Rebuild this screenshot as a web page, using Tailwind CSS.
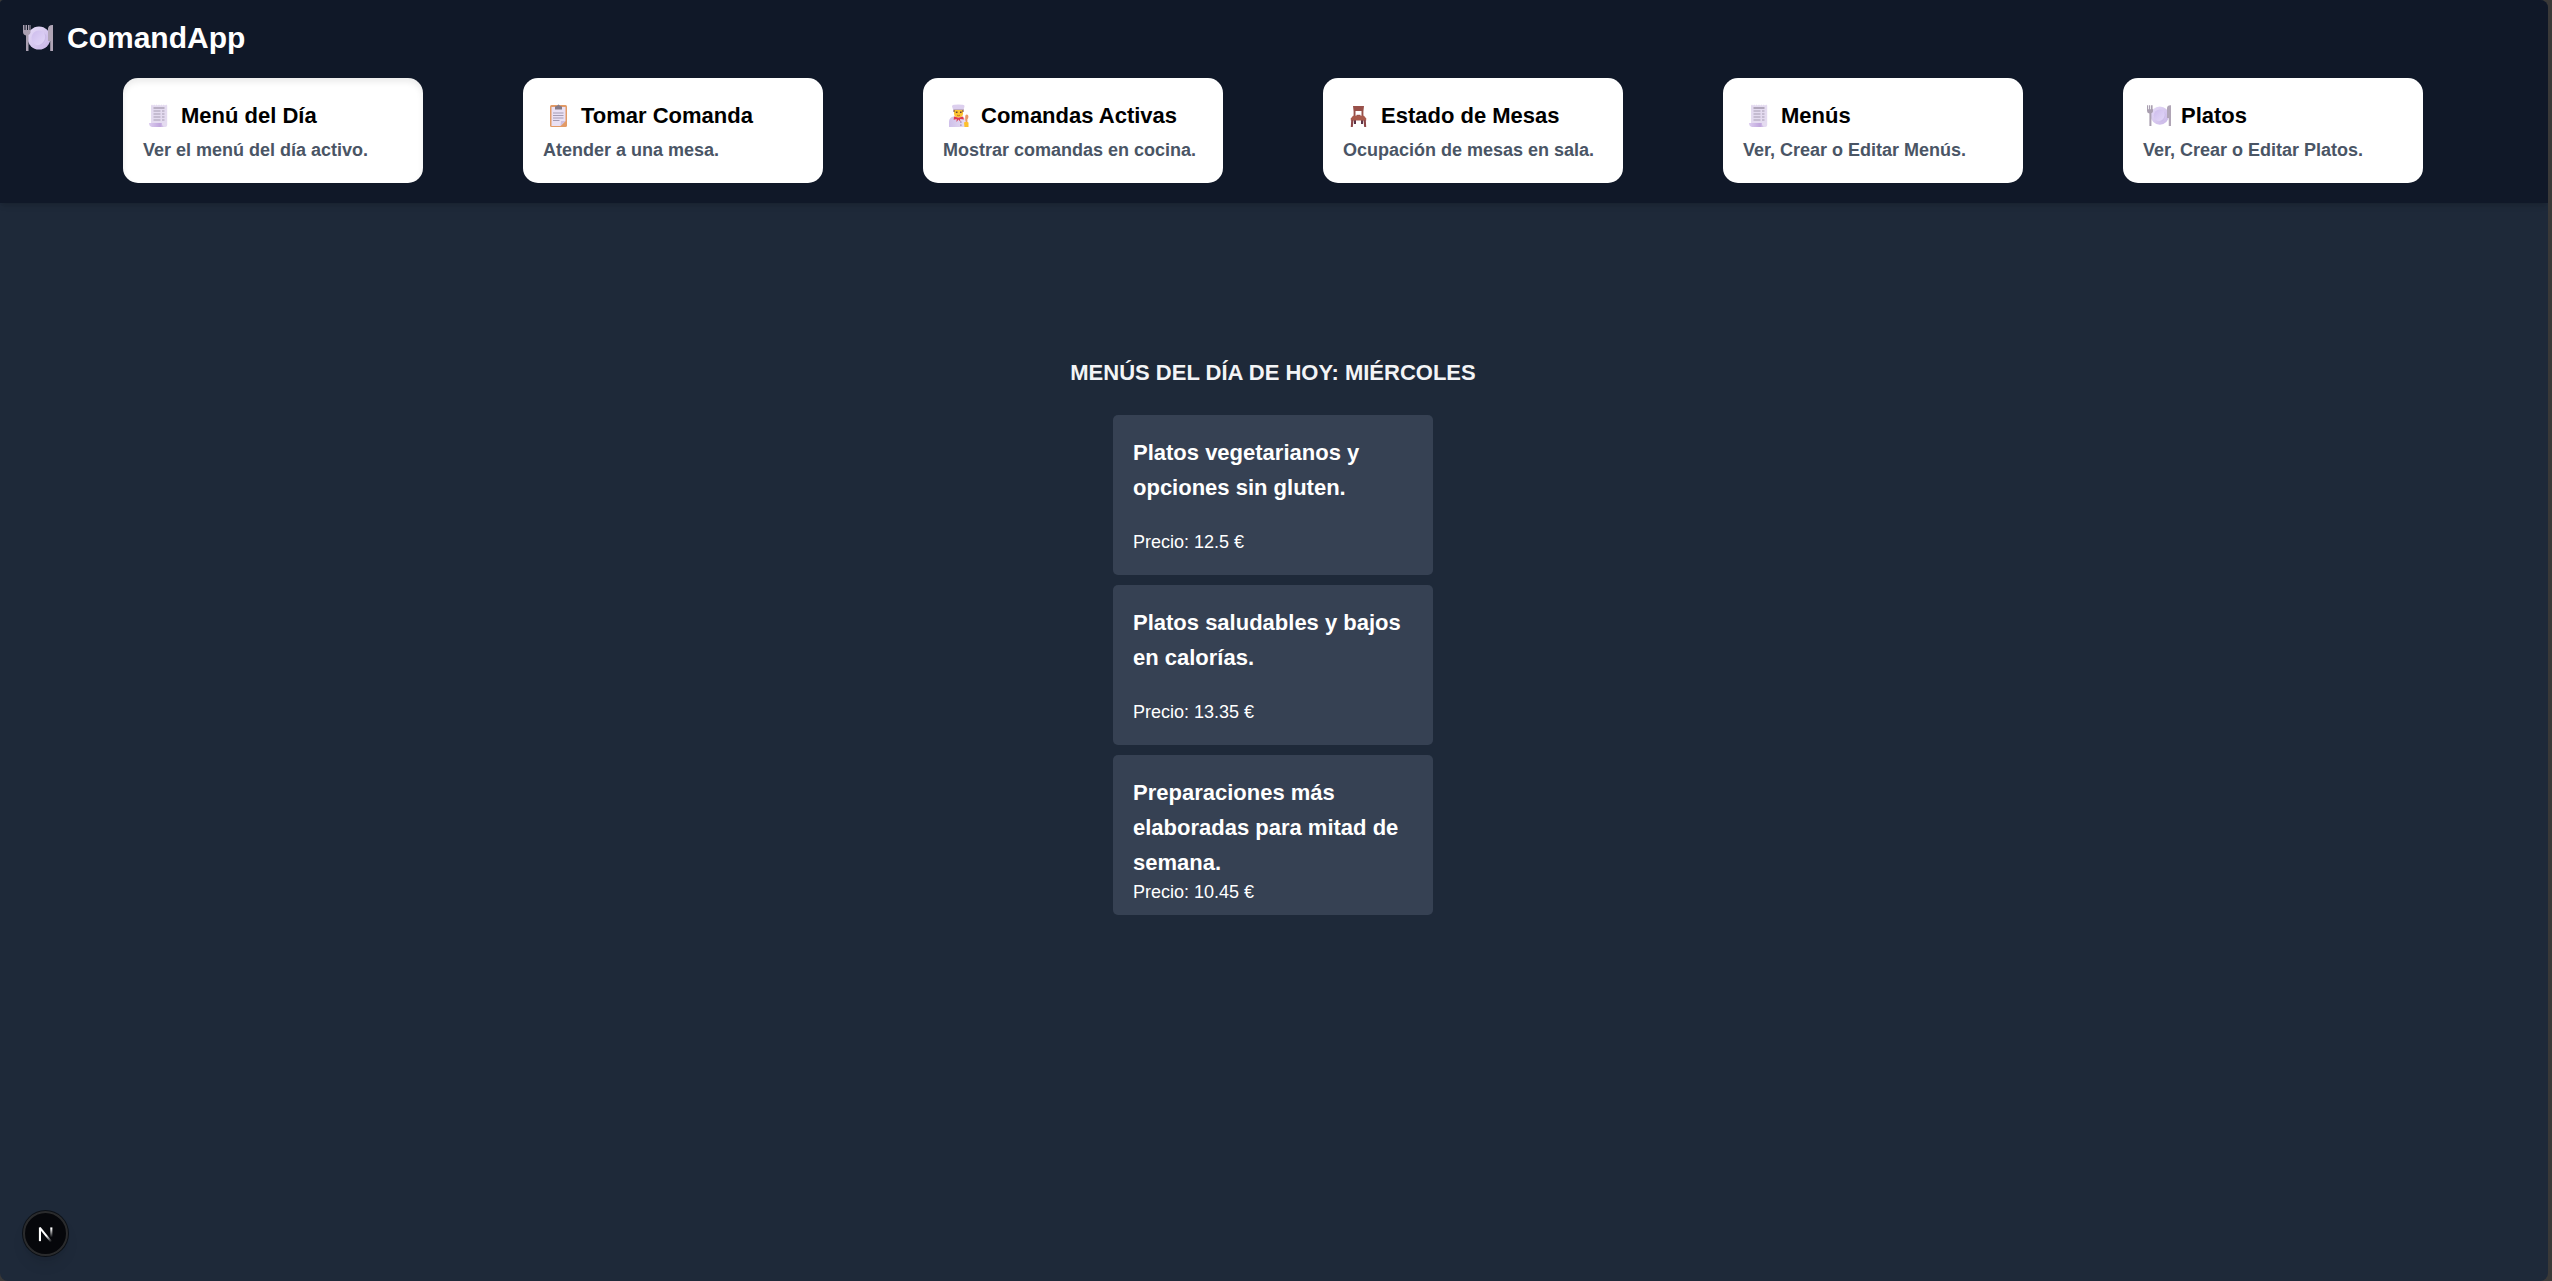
<!DOCTYPE html>
<html lang="es" class="bg-[#3a3938]">
<head>
<meta charset="utf-8">
<meta name="viewport" content="width=device-width, initial-scale=1">
<title>ComandApp</title>
<script src="https://cdn.jsdelivr.net/npm/@tailwindcss/browser@4"></script>
</head>
<body class="pr-1 font-['Liberation_Sans',Arial,sans-serif]">

<!-- Shared icon symbols -->
<svg class="absolute size-0" aria-hidden="true">
  <defs>
    <linearGradient id="plateFill" x1="0" y1="0" x2="1" y2="1"><stop offset="0" stop-color="#e6dcf8"/><stop offset="1" stop-color="#c8b5e6"/></linearGradient>
    <linearGradient id="plateInner" x1="0" y1="0" x2="1" y2="1"><stop offset="0" stop-color="#cdbcec"/><stop offset=".5" stop-color="#d9cbf3"/><stop offset="1" stop-color="#e3d8f7"/></linearGradient>
    <linearGradient id="rollFill" x1="0" y1="0" x2="1" y2="0"><stop offset="0" stop-color="#dccdf0"/><stop offset=".7" stop-color="#c0a6dc"/><stop offset="1" stop-color="#e6dcf4"/></linearGradient>
    <linearGradient id="coatFill" x1="0" y1="0" x2="1" y2="0"><stop offset="0" stop-color="#cfc0ea"/><stop offset="1" stop-color="#e6def2"/></linearGradient>
    <linearGradient id="nDiag" x1="11" y1="11" x2="15" y2="17" gradientUnits="userSpaceOnUse"><stop stop-color="#fff"/><stop offset="1" stop-color="#fff" stop-opacity="0"/></linearGradient>
    <linearGradient id="nStem" x1="0" y1="5" x2="0" y2="13" gradientUnits="userSpaceOnUse"><stop stop-color="#fff"/><stop offset="1" stop-color="#fff" stop-opacity="0"/></linearGradient>
  </defs>
  <symbol id="plate" viewBox="0 0 30 27">
    <circle cx="16" cy="13" r="11.5" fill="url(#plateFill)"/>
    <circle cx="16" cy="13" r="7.5" fill="url(#plateInner)"/>
    <path d="M21 7.500a7.500 7.500 0 0 1-7 12.700a8.500 8.500 0 0 0 7-12.700z" fill="#bfaee0" opacity=".6"/>
    <path d="M0 0h1.500v5h1V0h1.500v5h1V0H6.500v5h.5V0h.5v7.500a3 3 0 0 1-2 2.500V26H3V10.500A3.500 3.500 0 0 1 0 7z" fill="#a99fb0"/>
    <path d="M25 3.500Q25.500 0 29 0h1v26h-2.800V16H25z" fill="#b0a5b6"/>
  </symbol>
  <symbol id="receipt" viewBox="0 0 24 24">
    <path d="M4 1.500l1-.9 1 .9 1.200-.9 1.200.9 1.200-.9 1.200.9 1.200-.9 1.200.9 1.200-.9 1.200.9 1.200-.9 1.200.9 1.200-.9 1 .9V21a2 2 0 0 1-2 2H8L4 19z" fill="#e4dbf0"/>
    <path d="M6.500 4h11" stroke="#8d8498" stroke-width="1.200"/>
    <path d="M6.500 7h7M6.500 10h7M6.500 13h7M6.500 16h7M15 7h2.500M15 10h2.500M15 13h2.500M15 16h2.500" stroke="#a69eb2" stroke-width="1.200"/>
    <path d="M2 19h13q-.5 3 3 4H5q-3-.5-3-4z" fill="url(#rollFill)"/>
  </symbol>
  <symbol id="clipboard" viewBox="0 0 24 24">
    <rect x="3" y="1" width="17" height="22" rx="1.500" fill="#e29a66"/>
    <path d="M4.500 3h14v14l-5 5h-9z" fill="#e9e0f4"/>
    <path d="M18.500 17H14l-.5 5z" fill="#cdbfdf"/>
    <path d="M8 5.500V3q0-1 1.500-1h.7q.3-1.500 1.300-1.500T12.800 2h.7Q15 2 15 3v2.500z" fill="#857b88"/>
    <path d="M6 9h10.500M6 11.500h10.500M6 14h10.500M6 16.500h6.500" stroke="#a49bb3" stroke-width="1"/>
  </symbol>
  <symbol id="cook" viewBox="0 0 24 24">
    <path d="M2 23v-5q0-5 5-5.500h7q5 .5 5 5.500v5z" fill="url(#coatFill)"/>
    <path d="M7 5h9v4.500q0 4-4.500 4T7 9.500z" fill="#fcc433"/>
    <path d="M6.500 5h10v3h-1V6h-8v2h-1z" fill="#6d4239"/>
    <path d="M5 2.500Q5 .5 7.500.8q4-.8 7.500 0 3-.3 2.500 1.700l-1 3.300H6.200z" fill="#dccfee"/>
    <path d="M8.800 7.600h1.700v1.400H8.800zM13 7.600h1.600v1.400H13z" fill="#6a4436"/>
    <path d="M10 11.200q1.600 1 3 0" stroke="#b85a28" stroke-width=".8" fill="none"/>
    <path d="M7 12.500l4.500 1.300 4.500-1.300 1 3-4-.5.5 3-2-2.500-2 2.500.2-3-3 .7z" fill="#e03a50"/>
    <path d="M13.300 17.500h1.200v1.300h-1.200zM13.300 20.500h1.200v1.300h-1.200z" fill="#8878a8"/>
    <path d="M18.200 16v-3.500q0-2 1.600-2t1.600 2-1 2.800V19h-1.200z" fill="#e89a6a"/>
    <path d="M17 18.500q2-1.500 4.500 0V23h-4z" fill="#fcc02c"/>
  </symbol>
  <symbol id="chair" viewBox="0 0 24 24">
    <path d="M7 15h2v5H7zM14 15h2v5h-2z" fill="#5c3548"/>
    <path d="M6 2h11l-.6 5.500V13h-1.900V7h-6v6H6.600V7.500z" fill="#985049"/>
    <path d="M9.500 10.800h4V13h-4z" fill="#985049"/>
    <path d="M6 11.700h11l2.200 2.800v2H3.800v-2z" fill="#a85a4c"/>
    <path d="M4.200 16h2.400L5.800 23H3.800zM16.400 16h2.400l.4 7h-2z" fill="#8c4648"/>
  </symbol>
</svg>

<div class="relative flex min-h-screen flex-col overflow-hidden rounded-lg rounded-tl-sm bg-gray-800">
  <header class="bg-gray-900 pt-4 pr-0.5 pb-5 shadow-md">
    <h1 class="flex h-11 items-center gap-[14px] pl-[23px] text-[30px] leading-[44px] font-bold text-white">
      <svg class="h-[27px] w-[30px]" aria-hidden="true"><use href="#plate"/></svg>
      ComandApp
    </h1>
    <nav class="mx-auto mt-[18px] grid max-w-[2400px] grid-cols-6 justify-items-center font-bold">
      <a href="#" class="w-[300px] rounded-[15px] bg-white p-5 inset-shadow-[0_4px_6px_rgba(0,0,0,0.08)]">
        <span class="flex items-center gap-[10px] pl-1 text-[22px] leading-[35px] text-black"><svg class="size-6" aria-hidden="true"><use href="#receipt"/></svg>Menú del Día</span>
        <span class="mt-[5px] block text-[18px] leading-[25px] text-gray-600">Ver el menú del día activo.</span>
      </a>
      <a href="#" class="w-[300px] rounded-[15px] bg-white p-5">
        <span class="flex items-center gap-[10px] pl-1 text-[22px] leading-[35px] text-black"><svg class="size-6" aria-hidden="true"><use href="#clipboard"/></svg>Tomar Comanda</span>
        <span class="mt-[5px] block text-[18px] leading-[25px] text-gray-600">Atender a una mesa.</span>
      </a>
      <a href="#" class="w-[300px] rounded-[15px] bg-white p-5">
        <span class="flex items-center gap-[10px] pl-1 text-[22px] leading-[35px] text-black"><svg class="size-6" aria-hidden="true"><use href="#cook"/></svg>Comandas Activas</span>
        <span class="mt-[5px] block text-[18px] leading-[25px] text-gray-600">Mostrar comandas en cocina.</span>
      </a>
      <a href="#" class="w-[300px] rounded-[15px] bg-white p-5">
        <span class="flex items-center gap-[10px] pl-1 text-[22px] leading-[35px] text-black"><svg class="size-6" aria-hidden="true"><use href="#chair"/></svg>Estado de Mesas</span>
        <span class="mt-[5px] block text-[18px] leading-[25px] text-gray-600">Ocupación de mesas en sala.</span>
      </a>
      <a href="#" class="w-[300px] rounded-[15px] bg-white p-5">
        <span class="flex items-center gap-[10px] pl-1 text-[22px] leading-[35px] text-black"><svg class="size-6" aria-hidden="true"><use href="#receipt"/></svg>Menús</span>
        <span class="mt-[5px] block text-[18px] leading-[25px] text-gray-600">Ver, Crear o Editar Menús.</span>
      </a>
      <a href="#" class="w-[300px] rounded-[15px] bg-white p-5">
        <span class="flex items-center gap-[10px] pl-1 text-[22px] leading-[35px] text-black"><svg class="size-6" aria-hidden="true"><use href="#plate"/></svg>Platos</span>
        <span class="mt-[5px] block text-[18px] leading-[25px] text-gray-600">Ver, Crear o Editar Platos.</span>
      </a>
    </nav>
  </header>

  <main class="flex flex-col items-center pt-[152px] pr-0.5 text-white">
    <h2 class="text-[22px] leading-[35px] font-bold text-gray-100">MENÚS DEL DÍA DE HOY: MIÉRCOLES</h2>
    <ul class="mt-[25px] flex w-80 flex-col gap-[10px]">
      <li class="flex h-40 flex-col justify-between rounded-[5px] bg-gray-700 p-5">
        <h3 class="text-[22px] leading-[35px] font-bold">Platos vegetarianos y opciones sin gluten.</h3>
        <p class="text-[18px] leading-[25px]">Precio: 12.5 €</p>
      </li>
      <li class="flex h-40 flex-col justify-between rounded-[5px] bg-gray-700 p-5">
        <h3 class="text-[22px] leading-[35px] font-bold">Platos saludables y bajos en calorías.</h3>
        <p class="text-[18px] leading-[25px]">Precio: 13.35 €</p>
      </li>
      <li class="flex h-40 flex-col justify-between rounded-[5px] bg-gray-700 p-5">
        <h3 class="text-[22px] leading-[35px] font-bold">Preparaciones más elaboradas para mitad de semana.</h3>
        <p class="text-[18px] leading-[25px]">Precio: 10.45 €</p>
      </li>
    </ul>
  </main>

  <!-- Floating dev tools button -->
  <button type="button" aria-label="Next.js" class="absolute bottom-[25px] left-[23px] flex size-[45px] items-center justify-center rounded-full border-2 border-[#2a2b2d] bg-[#06070b] shadow-lg ring-1 ring-black/60">
    <svg class="size-[22px]" viewBox="0 0 20 20" fill="none" aria-hidden="true">
      <path d="M4.500 4.500L15.500 18" stroke="url(#nDiag)" stroke-width="1.900"/>
      <path d="M4.500 16.500V4" stroke="#fff" stroke-width="1.900"/>
      <path d="M13.900 4h1.900v9h-1.900z" fill="url(#nStem)"/>
    </svg>
  </button>
</div>
</body>
</html>
